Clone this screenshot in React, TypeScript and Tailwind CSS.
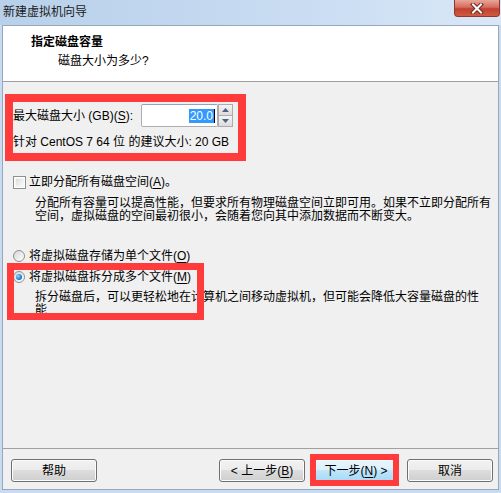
import React from 'react';

const FONT = "font-['Liberation_Sans','Noto_Sans_CJK_SC',sans-serif]";

function Mn({ c }: { c: string }) {
  return <span className="underline underline-offset-[2px]">{c}</span>;
}

function CheckBox() {
  return (
    <span className="w-[13px] h-[13px] shrink-0 border border-[#8e8f8f] bg-white p-[1px]">
      <span className="block w-full h-full bg-[linear-gradient(135deg,#dcdcdc,#fbfbfb)] border border-[#f4f4f4]" />
    </span>
  );
}

function Radio({ checked }: { checked?: boolean }) {
  return (
    <span className="w-[12px] h-[12px] shrink-0 rounded-full border border-[#8e8f8f] bg-[linear-gradient(135deg,#d6d6d6,#ffffff)] flex items-center justify-center">
      {checked && (
        <span className="w-[6px] h-[6px] rounded-full bg-[radial-gradient(circle_at_35%_35%,#9ad6ff,#1a7fd0_60%,#0b4f8f)]" />
      )}
    </span>
  );
}

function WinButton({ children, primary }: { children: React.ReactNode; primary?: boolean }) {
  return (
    <button
      className={
        primary
          ? 'w-[86px] h-[23px] rounded-[3px] border border-[#3c7fb1] bg-[linear-gradient(#eaf6fd_0%,#d9f0fc_50%,#bee6fd_50%,#a7d9f5_100%)] shadow-[inset_0_0_0_1px_#f4fbff] text-[12px] leading-[16px] text-black flex items-center justify-center'
          : 'w-[86px] h-[23px] rounded-[3px] border border-[#707070] bg-[linear-gradient(#f2f2f2_0%,#ebebeb_50%,#dddddd_50%,#cfcfcf_100%)] shadow-[inset_0_0_0_1px_#fcfcfc] text-[12px] leading-[16px] text-black flex items-center justify-center'
      }
    >
      {children}
    </button>
  );
}

export default function App() {
  return (
    <div className={`relative w-[501px] h-[493px] flex flex-col bg-[#c8dbf0] text-[12px] text-black ${FONT}`}>
      {/* title bar */}
      <div className="h-[25px] flex items-start justify-between bg-[linear-gradient(90deg,#b8d0ea,#c9dcf2_60%,#d9e8f7)]">
        <span className="pl-[3px] pt-[4px] leading-[16px] text-[#1a1a1a]">新建虚拟机向导</span>
        <div className="mr-[1px] w-[46px] h-[17px] rounded-b-[4px] border border-t-0 border-[#8c3a30] bg-[linear-gradient(#e9a698_0%,#d66d5e_45%,#c2402f_55%,#d25a41_100%)] flex items-center justify-center">
          <svg width="14" height="11" viewBox="0 0 14 11">
            <path d="M3 1.5 L11 9.5 M11 1.5 L3 9.5" stroke="#6b2a22" strokeWidth="4" strokeLinecap="square" />
            <path d="M3 1.5 L11 9.5 M11 1.5 L3 9.5" stroke="#ffffff" strokeWidth="2" strokeLinecap="square" />
          </svg>
        </div>
      </div>

      {/* client area */}
      <div className="flex-1 mx-[2px] mb-[3px] border border-[#97a8bd] bg-[#f0f0f0] flex flex-col">
        <div className="h-[56px] bg-white pl-[28px] pt-[8px] border-b border-[#a0a0a0]">
          <div className="font-bold leading-[16px]">指定磁盘容量</div>
          <div className="pl-[27px] mt-[3px] leading-[16px]">磁盘大小为多少?</div>
        </div>

        <div className="flex-1 pl-[10px] pt-[22px]">
          <div className="flex items-center h-[23px] gap-[8px]">
            <span className="leading-[16px]">
              最大磁盘大小 (GB)(<Mn c="S" />):
            </span>
            <div className="flex h-[23px]">
              <div className="w-[77px] h-[23px] border border-[#abadb3] border-t-[#8ea5c0] rounded-[2px] bg-white flex items-center justify-end pr-[2px]">
                <span className="bg-[#3399ff] text-white leading-[14px] px-[1px]">20.0</span>
                <span className="w-[1px] h-[14px] bg-black" />
              </div>
              <div className="w-[15px] h-[23px] border border-[#acacac] flex flex-col">
                <div className="flex-1 bg-[linear-gradient(#f4f4f4,#dcdcdc)] border-b border-[#acacac] flex items-center justify-center">
                  <svg width="7" height="4" viewBox="0 0 7 4"><path d="M0 4 L3.5 0 L7 4 Z" fill="#4d6185" /></svg>
                </div>
                <div className="flex-1 bg-[linear-gradient(#f4f4f4,#dcdcdc)] flex items-center justify-center">
                  <svg width="7" height="4" viewBox="0 0 7 4"><path d="M0 0 L7 0 L3.5 4 Z" fill="#4d6185" /></svg>
                </div>
              </div>
            </div>
          </div>
          <div className="mt-[7px] leading-[16px]">针对 CentOS 7 64 位 的建议大小: 20 GB</div>

          <div className="mt-[24px] flex items-center gap-[3px] leading-[16px]">
            <CheckBox />
            <span>
              立即分配所有磁盘空间(<Mn c="A" />)。
            </span>
          </div>
          <div className="mt-[7px] ml-[22px] leading-[13px]">
            分配所有容量可以提高性能，但要求所有物理磁盘空间立即可用。如果不立即分配所有
            <br />
            空间，虚拟磁盘的空间最初很小，会随着您向其中添加数据而不断变大。
          </div>

          <div className="mt-[25px] flex items-center gap-[4px] leading-[16px]">
            <Radio />
            <span>
              将虚拟磁盘存储为单个文件(<Mn c="O" />)
            </span>
          </div>
          <div className="mt-[5px] flex items-center gap-[4px] leading-[16px]">
            <Radio checked />
            <span>
              将虚拟磁盘拆分成多个文件(<Mn c="M" />)
            </span>
          </div>
          <div className="mt-[6px] ml-[22px] leading-[13px]">
            拆分磁盘后，可以更轻松地在计算机之间移动虚拟机，但可能会降低大容量磁盘的性
            <br />
            能
          </div>
        </div>

        <div className="h-[41px] border-t border-[#a0a0a0] flex items-start pt-[10px] pl-[8px] pr-[5px]">
          <WinButton>帮助</WinButton>
          <div className="ml-auto flex gap-[8px]">
            <WinButton>
              &lt; 上一步(<Mn c="B" />)
            </WinButton>
            <WinButton primary>
              下一步(<Mn c="N" />) &gt;
            </WinButton>
            <WinButton>取消</WinButton>
          </div>
        </div>
      </div>

      {/* red annotation boxes */}
      <div className="absolute left-[5px] top-[94px] w-[241px] h-[67px] border-[8px] border-[#ff3b3b]" />
      <div className="absolute left-[7px] top-[263px] w-[197px] h-[57px] border-[7px] border-[#ff3b3b]" />
      <div className="absolute left-[310px] top-[454px] w-[89px] h-[32px] border-[6px] border-[#ff3b3b]" />
    </div>
  );
}
